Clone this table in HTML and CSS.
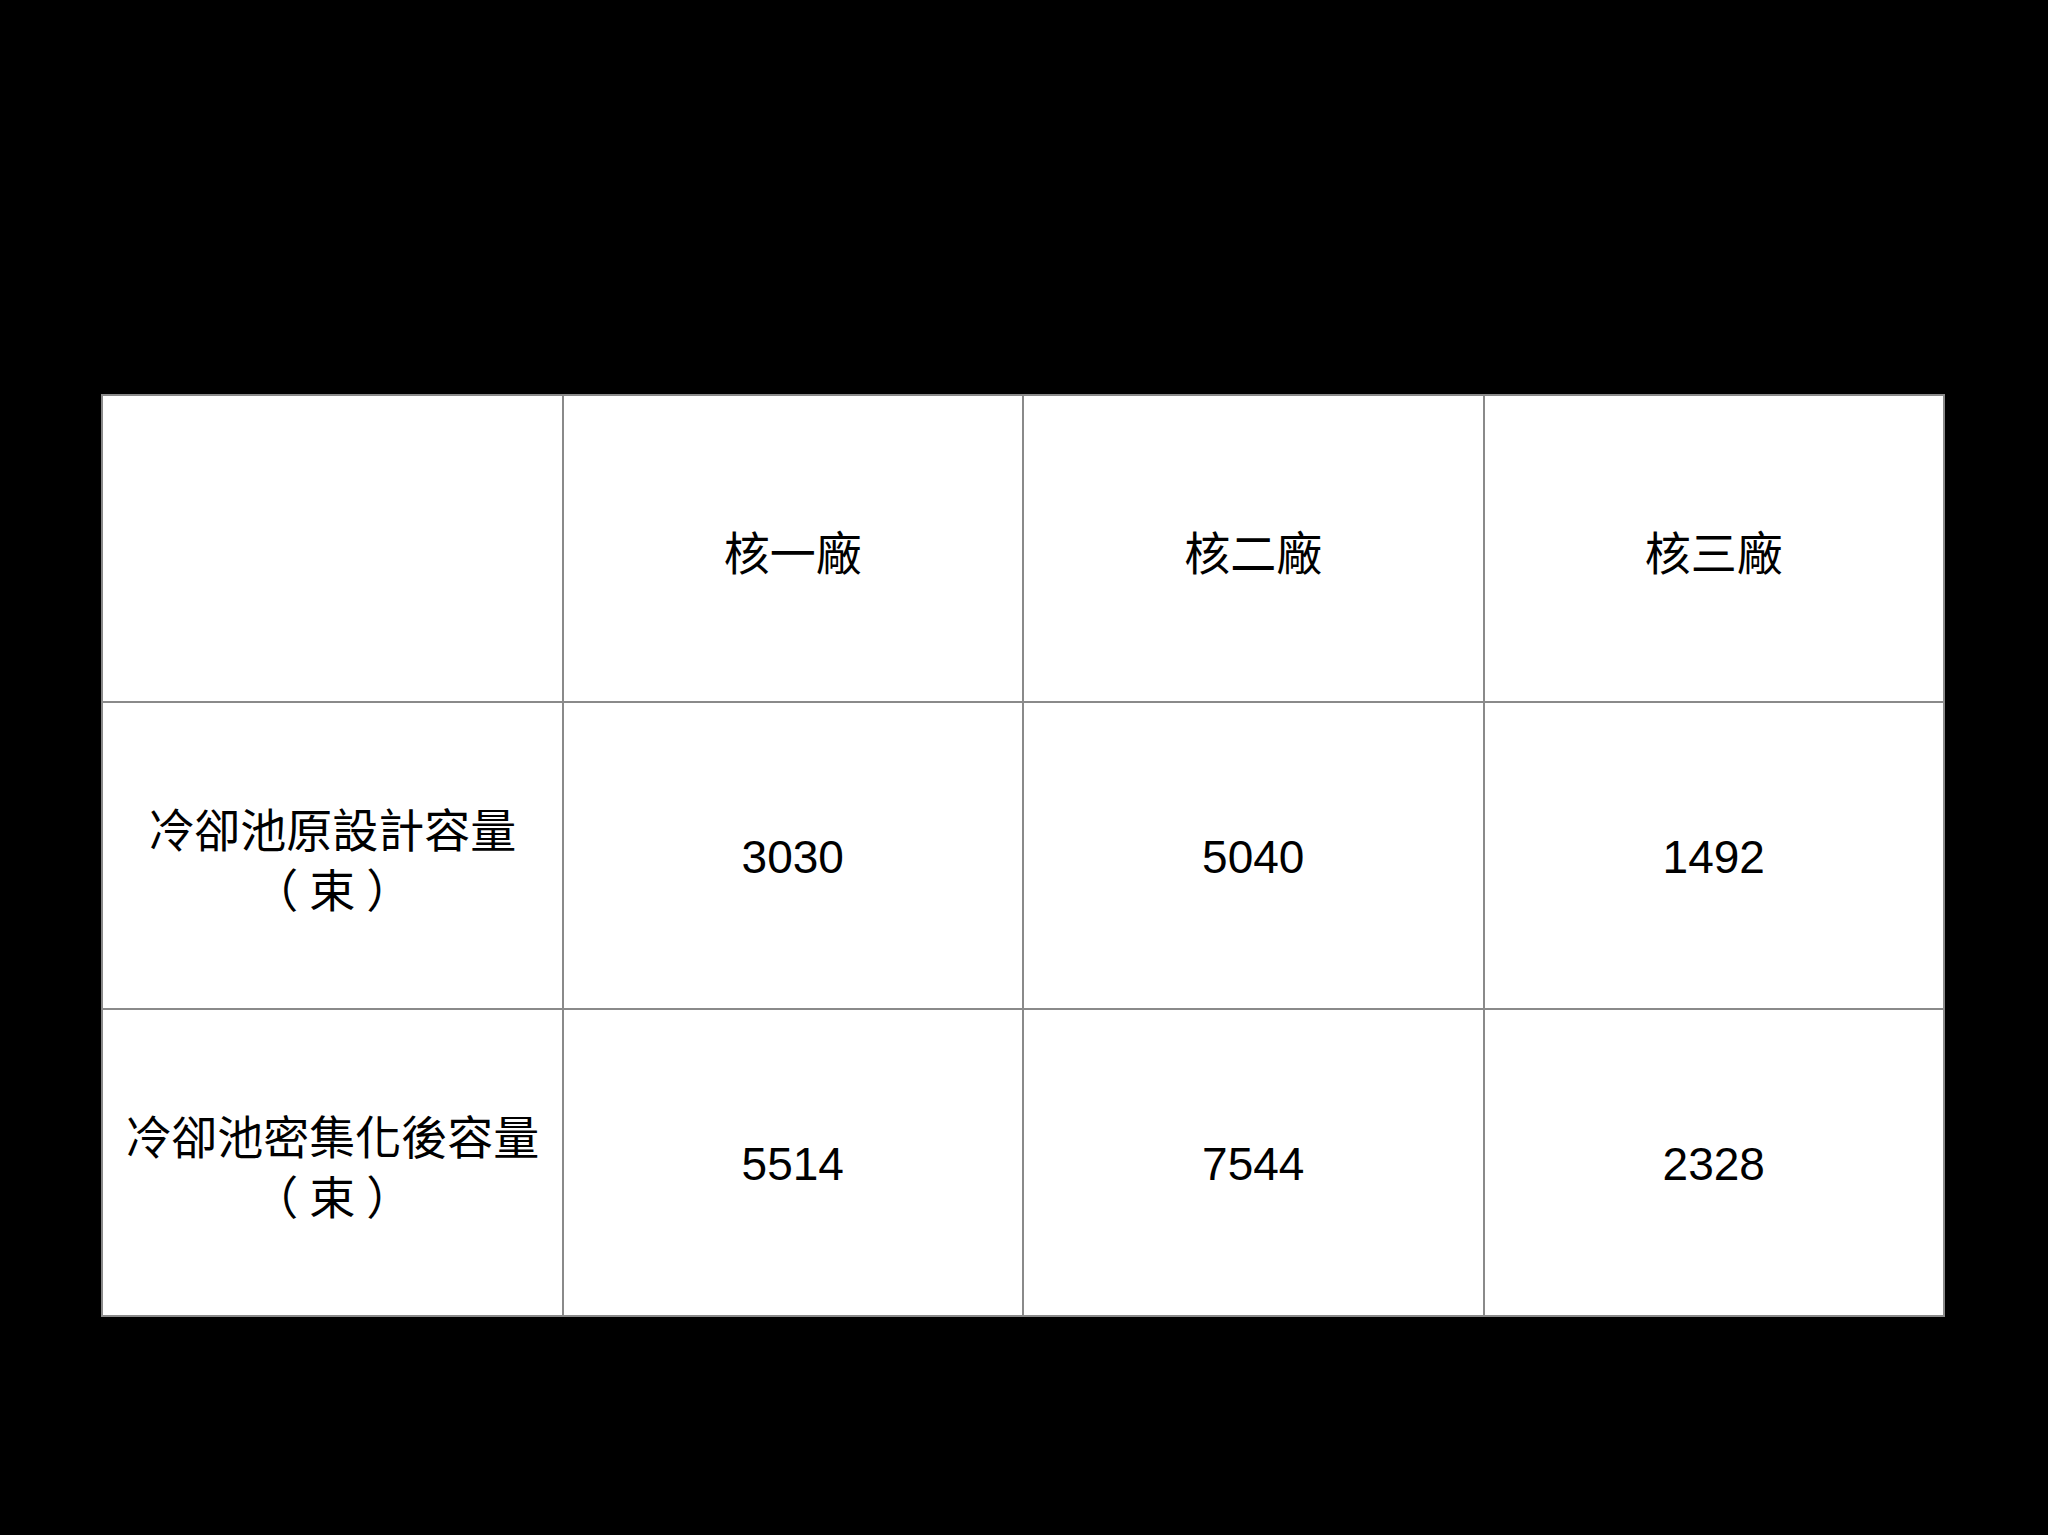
FILE: index.html
```html
<!DOCTYPE html>
<html lang="zh-Hant">
<head>
<meta charset="utf-8">
<link rel="stylesheet" href="styles.css">
</head>
<body>
<div class="slide">
  <table class="data">
    <tr>
      <td></td>
      <td class="cjk">核一廠</td>
      <td class="cjk">核二廠</td>
      <td class="cjk">核三廠</td>
    </tr>
    <tr>
      <td class="label cjk">冷卻池原設計容量<br>（<span class="unit">束</span>）</td>
      <td>3030</td>
      <td>5040</td>
      <td>1492</td>
    </tr>
    <tr>
      <td class="label cjk">冷卻池密集化後容量<br>（<span class="unit">束</span>）</td>
      <td>5514</td>
      <td>7544</td>
      <td>2328</td>
    </tr>
  </table>
</div>
</body>
</html>
```

FILE: styles.css
```css
html, body {
  margin: 0;
  padding: 0;
  background: #000;
}
.slide {
  width: 2048px;
  height: 1535px;
  box-sizing: border-box;
  padding: 394px 0 0 101px;
  background: #000;
}
.data {
  width: 1844px;
  height: 922px;
  border-collapse: collapse;
  table-layout: fixed;
  background: #fff;
  font-family: "Liberation Sans", "Noto Sans CJK TC", sans-serif;
  font-size: 46px;
  line-height: 60px;
  color: #000;
}
.data td {
  border: 2px solid #8a8a8a;
  text-align: center;
  vertical-align: middle;
  padding: 3px 0 0;
}
.data tr {
  height: 307px;
}
.cjk {
  font-family: "Noto Sans CJK TC", sans-serif;
}
.label {
  white-space: nowrap;
}
.unit {
  margin: 0 11px;
}
```
